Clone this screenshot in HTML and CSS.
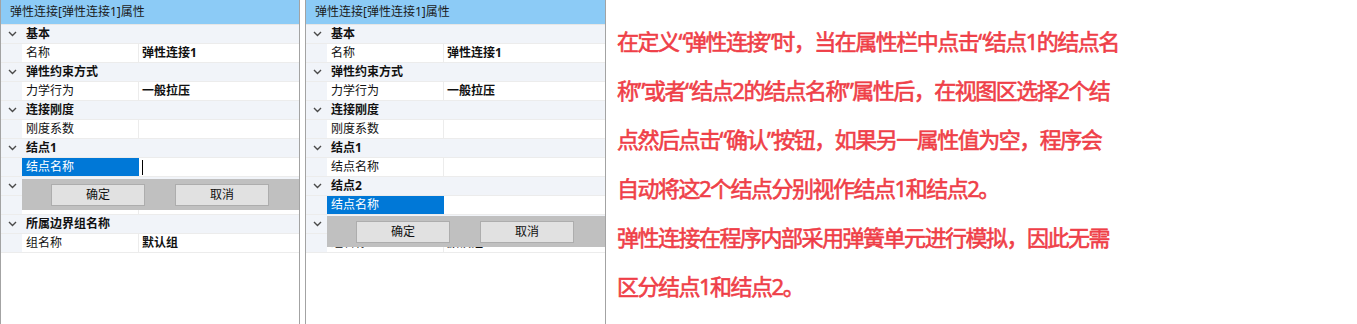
FILE: index.html
```html
<!DOCTYPE html>
<html lang="zh">
<head>
<meta charset="utf-8">
<title>弹性连接属性</title>
<link rel="stylesheet" href="styles.css">
</head>
<body>
<div class="page">
  <section class="panel">
    <div class="ph">弹性连接[弹性连接1]属性</div>
    <div class="rows">
      <div class="row grp"><span class="gut"><svg class="chev" viewBox="0 0 9 6" width="9" height="6"><path d="M1 1 L4.5 4.5 L8 1"/></svg></span><span class="gname">基本</span></div>
      <div class="row prop"><span class="gut"></span><span class="nm">名称</span><span class="val b">弹性连接1</span></div>
      <div class="row grp"><span class="gut"><svg class="chev" viewBox="0 0 9 6" width="9" height="6"><path d="M1 1 L4.5 4.5 L8 1"/></svg></span><span class="gname">弹性约束方式</span></div>
      <div class="row prop"><span class="gut"></span><span class="nm">力学行为</span><span class="val b">一般拉压</span></div>
      <div class="row grp"><span class="gut"><svg class="chev" viewBox="0 0 9 6" width="9" height="6"><path d="M1 1 L4.5 4.5 L8 1"/></svg></span><span class="gname">连接刚度</span></div>
      <div class="row prop"><span class="gut"></span><span class="nm">刚度系数</span><span class="val"></span></div>
      <div class="row grp"><span class="gut"><svg class="chev" viewBox="0 0 9 6" width="9" height="6"><path d="M1 1 L4.5 4.5 L8 1"/></svg></span><span class="gname">结点1</span></div>
      <div class="row prop"><span class="gut"></span><span class="nm sel">结点名称</span><span class="val"><span class="caret"></span></span></div>
      <div class="row grp"><span class="gut"><svg class="chev" viewBox="0 0 9 6" width="9" height="6"><path d="M1 1 L4.5 4.5 L8 1"/></svg></span><span class="gname">结点2</span></div>
      <div class="row prop"><span class="gut"></span><span class="nm">结点名称</span><span class="val"></span></div>
      <div class="row grp"><span class="gut"><svg class="chev" viewBox="0 0 9 6" width="9" height="6"><path d="M1 1 L4.5 4.5 L8 1"/></svg></span><span class="gname">所属边界组名称</span></div>
      <div class="row prop"><span class="gut"></span><span class="nm">组名称</span><span class="val b">默认组</span></div>
    </div>
    <div class="popup pop-left"><span class="btn">确定</span><span class="btn">取消</span></div>
  </section>

  <section class="panel panel-right">
    <div class="ph">弹性连接[弹性连接1]属性</div>
    <div class="rows">
      <div class="row grp"><span class="gut"><svg class="chev" viewBox="0 0 9 6" width="9" height="6"><path d="M1 1 L4.5 4.5 L8 1"/></svg></span><span class="gname">基本</span></div>
      <div class="row prop"><span class="gut"></span><span class="nm">名称</span><span class="val b">弹性连接1</span></div>
      <div class="row grp"><span class="gut"><svg class="chev" viewBox="0 0 9 6" width="9" height="6"><path d="M1 1 L4.5 4.5 L8 1"/></svg></span><span class="gname">弹性约束方式</span></div>
      <div class="row prop"><span class="gut"></span><span class="nm">力学行为</span><span class="val b">一般拉压</span></div>
      <div class="row grp"><span class="gut"><svg class="chev" viewBox="0 0 9 6" width="9" height="6"><path d="M1 1 L4.5 4.5 L8 1"/></svg></span><span class="gname">连接刚度</span></div>
      <div class="row prop"><span class="gut"></span><span class="nm">刚度系数</span><span class="val"></span></div>
      <div class="row grp"><span class="gut"><svg class="chev" viewBox="0 0 9 6" width="9" height="6"><path d="M1 1 L4.5 4.5 L8 1"/></svg></span><span class="gname">结点1</span></div>
      <div class="row prop"><span class="gut"></span><span class="nm">结点名称</span><span class="val"></span></div>
      <div class="row grp"><span class="gut"><svg class="chev" viewBox="0 0 9 6" width="9" height="6"><path d="M1 1 L4.5 4.5 L8 1"/></svg></span><span class="gname">结点2</span></div>
      <div class="row prop"><span class="gut"></span><span class="nm sel">结点名称</span><span class="val"></span></div>
      <div class="row grp"><span class="gut"><svg class="chev" viewBox="0 0 9 6" width="9" height="6"><path d="M1 1 L4.5 4.5 L8 1"/></svg></span><span class="gname">所属边界组名称</span></div>
      <div class="row prop"><span class="gut"></span><span class="nm">组名称</span><span class="val b">默认组</span></div>
    </div>
    <div class="popup pop-right"><span class="btn">确定</span><span class="btn">取消</span></div>
  </section>

  <div class="note">
    在定义“弹性连接”时，当在属性栏中点击“结点1的结点名<br>
    称”或者“结点2的结点名称”属性后，在视图区选择2个结<br>
    点然后点击“确认”按钮，如果另一属性值为空，程序会<br>
    自动将这2个结点分别视作结点1和结点2。<br>
    弹性连接在程序内部采用弹簧单元进行模拟，因此无需<br>
    区分结点1和结点2。
  </div>
</div>
</body>
</html>
```

FILE: styles.css
```css
html, body {
  margin: 0;
  padding: 0;
  background: #ffffff;
}

.page {
  display: flex;
  align-items: flex-start;
  height: 324px;
  overflow: hidden;
  font-family: "Noto Sans", "Noto Sans CJK SC", sans-serif;
}

.panel {
  position: relative;
  box-sizing: border-box;
  width: 300px;
  height: 324px;
  border-left: 1px solid #a3a3a3;
  border-right: 1px solid #a3a3a3;
  background: #ffffff;
  font-size: 12px;
  color: #111111;
}

.panel-right {
  width: 301px;
  margin-left: 5px;
}

.ph {
  height: 24px;
  line-height: 24px;
  padding-left: 9px;
  background: #8ccbf6;
  border-bottom: 1px solid #e6e6e6;
  color: #1b1b1b;
  white-space: nowrap;
}

.rows {
  display: flex;
  flex-direction: column;
}

.row {
  display: flex;
  height: 18px;
  line-height: 18px;
  border-bottom: 1px solid #ececec;
  white-space: nowrap;
}

.grp {
  background: #f1f4f9;
}

.gut {
  flex: 0 0 21px;
  display: flex;
  align-items: center;
  padding-left: 7px;
  box-sizing: border-box;
  background: #f1f4f9;
}

.chev {
  display: block;
  fill: none;
  stroke: #4a4a4a;
  stroke-width: 1.4;
  margin-top: -1px;
}

.gname {
  padding-left: 4px;
  font-weight: 700;
}

.nm {
  flex: 0 0 117px;
  box-sizing: border-box;
  padding-left: 4px;
  border-right: 1px solid #ececec;
  background: #ffffff;
}

.nm.sel {
  background: #0078d7;
  color: #ffffff;
  border-right-color: #0078d7;
}

.val {
  flex: 1 1 auto;
  padding-left: 3px;
  background: #ffffff;
  display: flex;
  align-items: center;
}

.val.b {
  font-weight: 700;
}

.caret {
  display: block;
  width: 1px;
  height: 15px;
  background: #000000;
}

.popup {
  position: absolute;
  left: 21px;
  right: 0;
  height: 31px;
  background: #c0c0c0;
  display: flex;
  align-items: flex-start;
  gap: 30px;
  padding: 5px 0 0 29px;
  box-sizing: border-box;
}

.pop-left {
  top: 179px;
}

.pop-right {
  top: 216px;
}

.btn {
  box-sizing: border-box;
  width: 94px;
  height: 22px;
  line-height: 20px;
  text-align: center;
  background: #e1e1e1;
  border: 1px solid #adadad;
  color: #111111;
  font-size: 12px;
}

.note {
  margin-left: 11px;
  padding-top: 17px;
  font-size: 22px;
  font-weight: 400;
  -webkit-text-stroke: 0.6px #ef3f48;
  line-height: 49px;
  letter-spacing: -1.5px;
  color: #ef3f48;
  white-space: nowrap;
}
```
